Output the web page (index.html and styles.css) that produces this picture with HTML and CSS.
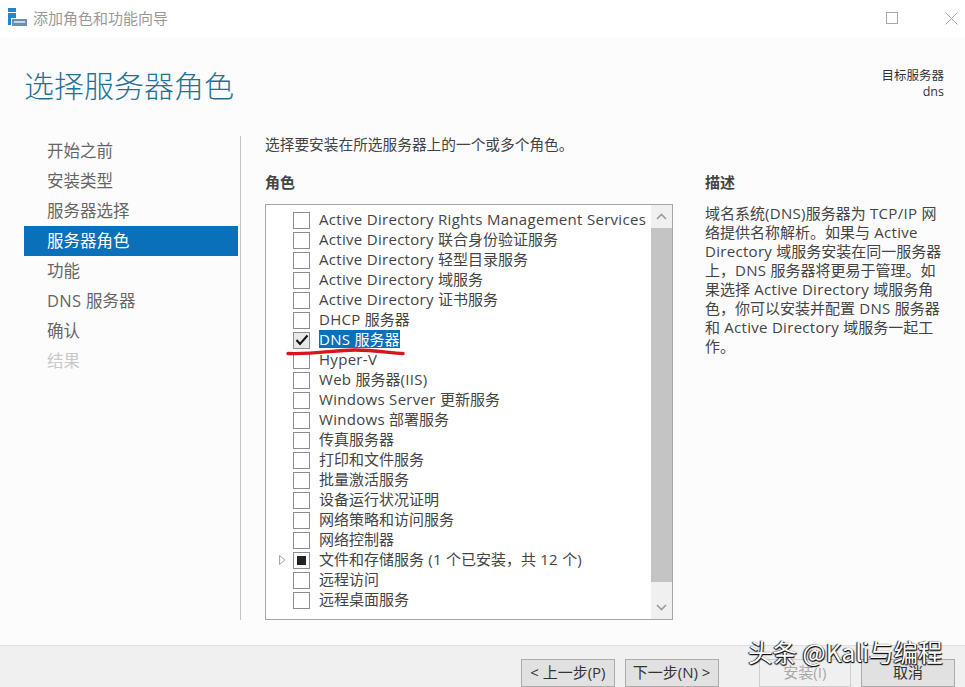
FILE: index.html
```html
<!DOCTYPE html>
<html lang="zh-CN">
<head>
<meta charset="utf-8">
<title>添加角色和功能向导</title>
<link rel="stylesheet" href="styles.css">
</head>
<body>
<div class="window">
  <header class="titlebar">
    <svg class="app-icon" width="20" height="20" viewBox="0 0 20 20">
      <rect x="0" y="0" width="8" height="17" fill="#1f86d0"/>
      <rect x="0" y="4" width="8" height="1" fill="#fff"/>
      <rect x="3" y="10" width="16" height="8" fill="#fff"/>
      <rect x="4" y="11" width="15" height="7" fill="#6e8fae"/>
      <rect x="6" y="13" width="11" height="2" fill="#c9d6e2"/>
    </svg>
    <span class="titlebar-text">添加角色和功能向导</span>
    <div class="window-controls">
      <svg width="13" height="13" viewBox="0 0 13 13"><rect x="0.5" y="0.5" width="11" height="11" fill="none" stroke="#a8a8a8"/></svg>
      <svg width="13" height="13" viewBox="0 0 13 13"><path d="M0.5 0.5 12.5 12.5M12.5 0.5 0.5 12.5" fill="none" stroke="#a8a8a8"/></svg>
    </div>
  </header>
  <main class="body">
    <div class="heading">
      <h1 class="page-title">选择服务器角色</h1>
      <div class="target"><div>目标服务器</div><div>dns</div></div>
    </div>
    <div class="columns">
      <nav class="sidebar">
        <div class="nav-item">开始之前</div>
        <div class="nav-item">安装类型</div>
        <div class="nav-item">服务器选择</div>
        <div class="nav-item active">服务器角色</div>
        <div class="nav-item">功能</div>
        <div class="nav-item"><span class="lat">DNS </span>服务器</div>
        <div class="nav-item">确认</div>
        <div class="nav-item disabled">结果</div>
      </nav>
      <section class="content">
        <p class="intro">选择要安装在所选服务器上的一个或多个角色。</p>
        <div class="panes">
          <div class="roles-pane">
            <div class="label">角色</div>
            <div class="listbox">
              <div class="rows">
                <div class="row"><span class="twist"></span><span class="box"></span><span class="name"><span class="lat">Active Directory Rights Management Services</span></span></div>
                <div class="row"><span class="twist"></span><span class="box"></span><span class="name"><span class="lat">Active Directory </span>联合身份验证服务</span></div>
                <div class="row"><span class="twist"></span><span class="box"></span><span class="name"><span class="lat">Active Directory </span>轻型目录服务</span></div>
                <div class="row"><span class="twist"></span><span class="box"></span><span class="name"><span class="lat">Active Directory </span>域服务</span></div>
                <div class="row"><span class="twist"></span><span class="box"></span><span class="name"><span class="lat">Active Directory </span>证书服务</span></div>
                <div class="row"><span class="twist"></span><span class="box"></span><span class="name"><span class="lat">DHCP </span>服务器</span></div>
                <div class="row"><span class="twist"></span><span class="box checked"><svg width="14" height="12" viewBox="0 0 14 12"><path d="M1.5 6 5 10 12.5 1.5" fill="none" stroke="#111" stroke-width="2"/></svg></span><span class="name selected"><span class="lat">DNS </span>服务器</span></div>
                <div class="row"><span class="twist"></span><span class="box"></span><span class="name"><span class="lat">Hyper-V</span></span></div>
                <div class="row"><span class="twist"></span><span class="box"></span><span class="name"><span class="lat">Web </span>服务器<span class="lat">(IIS)</span></span></div>
                <div class="row"><span class="twist"></span><span class="box"></span><span class="name"><span class="lat">Windows Server </span>更新服务</span></div>
                <div class="row"><span class="twist"></span><span class="box"></span><span class="name"><span class="lat">Windows </span>部署服务</span></div>
                <div class="row"><span class="twist"></span><span class="box"></span><span class="name">传真服务器</span></div>
                <div class="row"><span class="twist"></span><span class="box"></span><span class="name">打印和文件服务</span></div>
                <div class="row"><span class="twist"></span><span class="box"></span><span class="name">批量激活服务</span></div>
                <div class="row"><span class="twist"></span><span class="box"></span><span class="name">设备运行状况证明</span></div>
                <div class="row"><span class="twist"></span><span class="box"></span><span class="name">网络策略和访问服务</span></div>
                <div class="row"><span class="twist"></span><span class="box"></span><span class="name">网络控制器</span></div>
                <div class="row"><span class="twist"><svg width="7" height="10" viewBox="0 0 7 10"><path d="M0.5 0.5 6 5 0.5 9.5Z" fill="#fff" stroke="#a6a6a6"/></svg></span><span class="box partial"><i></i></span><span class="name">文件和存储服务<span class="lat"> (1 </span>个已安装，共<span class="lat"> 12 </span>个<span class="lat">)</span></span></div>
                <div class="row"><span class="twist"></span><span class="box"></span><span class="name">远程访问</span></div>
                <div class="row"><span class="twist"></span><span class="box"></span><span class="name">远程桌面服务</span></div>
              </div>
              <div class="scrollbar">
                <div class="sb-btn"><svg width="11" height="7" viewBox="0 0 11 7"><path d="M1 6 5.5 1.5 10 6" fill="none" stroke="#9a9a9a" stroke-width="1.6"/></svg></div>
                <div class="sb-thumb"></div>
                <div class="sb-btn low"><svg width="11" height="7" viewBox="0 0 11 7"><path d="M1 1 5.5 5.5 10 1" fill="none" stroke="#9a9a9a" stroke-width="1.6"/></svg></div>
              </div>
            </div>
          </div>
          <aside class="desc">
            <div class="label">描述</div>
            <p class="desc-text">域名系统<span class="lat">(DNS)</span>服务器为<span class="lat"> TCP/IP </span>网络提供名称解析。如果与<span class="lat"> Active Directory </span>域服务安装在同一服务器上，<span class="lat">DNS </span>服务器将更易于管理。如果选择<span class="lat"> Active Directory </span>域服务角色，你可以安装并配置<span class="lat"> DNS </span>服务器和<span class="lat"> Active Directory </span>域服务一起工作。</p>
          </aside>
        </div>
      </section>
    </div>
  </main>
  <footer class="footer">
    <button class="btn">&lt; 上一步(P)</button>
    <button class="btn next">下一步(N) &gt;</button>
    <button class="btn install" disabled>安装(I)</button>
    <button class="btn">取消</button>
  </footer>
  <svg class="ink" width="125" height="14" viewBox="0 0 125 14"><path d="M3 8.5C30 9.5 50 5 70 5C90 5 105 8 118 8.5" fill="none" stroke="#d8141c" stroke-width="3.4" stroke-linecap="round"/></svg>
  <div class="watermark">头条 @Kali与编程</div>
</div>
</body>
</html>
```
FILE: styles.css
```css
* { box-sizing: border-box; }
html, body { margin: 0; padding: 0; }
body { width: 965px; height: 687px; overflow: hidden; background: #fcfcfc; font-family: "Open Sans", "Noto Sans CJK SC", sans-serif; color: #333; }
.window { position: relative; width: 965px; height: 687px; display: flex; flex-direction: column; }
.titlebar { height: 37px; background: #fff; display: flex; align-items: center; padding: 0 7px 0 8px; flex: none; }
.app-icon { margin-right: 5px; margin-top: -1px; }
.titlebar-text { font-size: 15px; color: #999; font-family: "Noto Sans CJK SC", sans-serif; margin-top: -3px; }
.window-controls { margin-left: auto; display: flex; gap: 46px; margin-top: -1px; }
.body { flex: 1; min-height: 0; display: flex; flex-direction: column; padding: 0 21px 25px 24px; }
.heading { height: 88px; display: flex; justify-content: space-between; flex: none; padding-top: 25px; }
.page-title { margin: 0; font-size: 30px; font-weight: 300; line-height: 44px; color: #1f7396; font-family: "Noto Sans CJK SC", sans-serif; }
.target { font-size: 12.5px; line-height: 16px; text-align: right; color: #333; padding-top: 6px; }
.lat { letter-spacing: 0.3px; }
.columns { flex: 1; min-height: 0; display: flex; padding-top: 11px; }
.sidebar { width: 217px; border-right: 1px solid #c4c4c4; padding-right: 2px; flex: none; margin-right: 24px; }
.nav-item { height: 30px; line-height: 29px; font-size: 16.5px; padding-left: 23px; color: #666; }
.nav-item.active { background: #0a70ba; color: #fff; }
.nav-item.disabled { color: #c8c8c8; }
.content { flex: 1; min-width: 0; display: flex; flex-direction: column; }
.intro { margin: 0; height: 37px; font-size: 14.7px; line-height: 16px; color: #444; }
.panes { flex: 1; min-height: 0; display: flex; }
.roles-pane { width: 408px; display: flex; flex-direction: column; flex: none; margin-right: 32px; }
.label { font-size: 15px; font-weight: 700; line-height: 18px; height: 31px; color: #444; }
.listbox { flex: 1; min-height: 0; border: 1px solid #a6a6a6; background: #fff; display: flex; }
.rows { flex: 1; min-width: 0; padding-top: 5px; }
.row { height: 20px; display: flex; align-items: center; font-size: 15px; color: #444; white-space: nowrap; }
.name { line-height: 18px; height: 18px; margin-bottom: 2px; }
.twist { width: 27px; flex: none; display: flex; justify-content: flex-end; padding-right: 7px; padding-left: 11px; }
.box { width: 17px; height: 17px; border: 1px solid #8c8c8c; background: #fff; margin-right: 9px; flex: none; display: flex; align-items: center; justify-content: center; }
.box.checked { background: #e8e8e8; }
.box.partial i { display: block; width: 9px; height: 9px; background: #222; }
.selected { background: #0a70ba; color: #fff; }
.scrollbar { width: 21px; flex: none; background: #f0f0f0; display: flex; flex-direction: column; }
.sb-btn { height: 23px; flex: none; display: flex; align-items: center; justify-content: center; }
.sb-btn.low { height: 37px; margin-top: auto; padding-top: 13px; }
.sb-thumb { flex: 1; background: #c4c4c4; }
.desc { flex: 1; min-width: 0; }
.desc-text { margin: 0; font-size: 15px; line-height: 19px; color: #444; width: 238px; }
.footer { height: 42px; flex: none; background: #f0f0f0; border-top: 1px solid #dfdfdf; display: flex; align-items: flex-start; padding: 13px 0 0 521px; }
.btn { width: 94px; height: 28px; border: 1px solid #acacac; background: #e1e1e1; font-family: "Open Sans", "Noto Sans CJK SC", sans-serif; font-size: 15px; line-height: 20px; color: #333; padding: 0 0 2px; margin-right: 10px; }
.btn.install { width: 93px; margin-left: 30px; margin-right: 10px; background: #f0f0f0; border-color: #cfcfcf; color: #a8a8a8; }
.ink { position: absolute; left: 285px; top: 345px; }
.watermark { position: absolute; left: 748px; top: 635px; font-size: 24.5px; line-height: 34px; color: #fff; font-family: "Noto Sans CJK SC", sans-serif; text-shadow: 1px 1px 1px #111, -1px 0 1px #111, 0 1px 1px #111; white-space: nowrap; }
```
